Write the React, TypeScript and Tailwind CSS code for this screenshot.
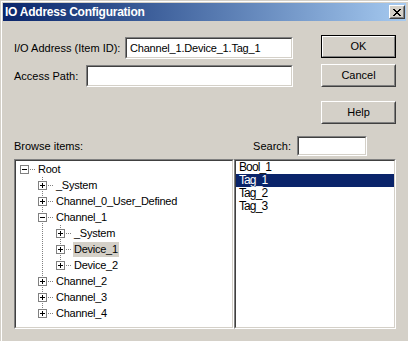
import type { ReactNode } from "react";

type TreeNode = {
  label: string;
  level: number;
  last: boolean;
  expanded?: boolean;
  selected?: boolean;
  through: number[];
};

const treeNodes: TreeNode[] = [
  { label: "Root", level: 0, last: true, expanded: true, through: [] },
  { label: "_System", level: 1, last: false, through: [] },
  { label: "Channel_0_User_Defined", level: 1, last: false, through: [] },
  { label: "Channel_1", level: 1, last: false, expanded: true, through: [] },
  { label: "_System", level: 2, last: false, through: [1] },
  { label: "Device_1", level: 2, last: false, selected: true, through: [1] },
  { label: "Device_2", level: 2, last: true, through: [1] },
  { label: "Channel_2", level: 1, last: false, through: [] },
  { label: "Channel_3", level: 1, last: false, through: [] },
  { label: "Channel_4", level: 1, last: true, through: [] },
];

const tags = ["Bool_1", "Tag_1", "Tag_2", "Tag_3"];

function Sunken({ className, children }: { className: string; children?: ReactNode }) {
  return (
    <div className={`border border-t-[#808080] border-l-[#808080] border-r-white border-b-white ${className}`}>
      <div className="h-full w-full overflow-hidden border border-t-[#404040] border-l-[#404040] border-r-[#d4d0c8] border-b-[#d4d0c8] bg-white">
        {children}
      </div>
    </div>
  );
}

function PushButton({ label, isDefault }: { label: string; isDefault?: boolean }) {
  if (isDefault) {
    return (
      <div className="h-[23px] w-[75px] border border-black">
        <div className="flex h-full items-center justify-center border border-t-white border-l-white border-r-[#808080] border-b-[#808080]">
          {label}
        </div>
      </div>
    );
  }
  return (
    <div className="h-[23px] w-[75px] border border-t-white border-l-white border-r-[#404040] border-b-[#404040]">
      <div className="flex h-full items-center justify-center border border-t-[#d4d0c8] border-l-[#d4d0c8] border-r-[#808080] border-b-[#808080]">
        {label}
      </div>
    </div>
  );
}

function TreeRow({ node }: { node: TreeNode }) {
  const L = node.level * 18;
  const cx = 8.5 + L;
  return (
    <div className="flex h-[16px] items-center">
      <svg width={21 + L} height={16} shapeRendering="crispEdges" className="shrink-0">
        {node.through.map((lv) => (
          <line key={lv} x1={8.5 + lv * 18} x2={8.5 + lv * 18} y1={0} y2={16} stroke="#808080" strokeDasharray="1 1" />
        ))}
        {node.level > 0 ? (
          <line x1={cx} x2={cx} y1={0} y2={node.last ? 8 : 16} stroke="#808080" strokeDasharray="1 1" />
        ) : null}
        <line x1={14 + L} x2={19 + L} y1={8.5} y2={8.5} stroke="#808080" strokeDasharray="1 1" />
        <rect x={4.5 + L} y={4.5} width={8} height={8} fill="white" stroke="#808080" />
        <line x1={6 + L} x2={11 + L} y1={8.5} y2={8.5} stroke="black" />
        {node.expanded ? null : <line x1={cx} x2={cx} y1={6} y2={11} stroke="black" />}
      </svg>
      <span className={`h-[15px] px-[1px] leading-[15px] whitespace-nowrap ${node.selected ? "bg-[#d4d0c8]" : ""}`}>
        {node.label}
      </span>
    </div>
  );
}

export default function App() {
  return (
    <div className="h-[341px] w-[408px] overflow-hidden bg-[#d4d0c8] pl-px pt-px font-['Liberation_Sans',Arial,sans-serif] text-[11px] text-black">
      <div className="h-full border-l border-t border-white pl-px pt-px">
        {/* title bar */}
        <div className="mr-[2px] flex h-[18px] items-center bg-gradient-to-r from-[#0a246a] to-[#a6caf0]">
          <span className="pl-[2px] text-[12px] font-bold leading-none tracking-[-0.25px] text-white">IO Address Configuration</span>
          <div className="ml-auto mr-px h-[14px] w-[16px] border border-t-white border-l-white border-r-[#404040] border-b-[#404040] bg-[#d4d0c8]">
            <div className="flex h-full items-center justify-center border border-t-[#d4d0c8] border-l-[#d4d0c8] border-r-[#808080] border-b-[#808080]">
              <svg width="8" height="7" shapeRendering="crispEdges">
                <rect x="0" y="0" width="2" height="1" />
                <rect x="6" y="0" width="2" height="1" />
                <rect x="1" y="1" width="2" height="1" />
                <rect x="5" y="1" width="2" height="1" />
                <rect x="2" y="2" width="4" height="1" />
                <rect x="3" y="3" width="2" height="1" />
                <rect x="2" y="4" width="4" height="1" />
                <rect x="1" y="5" width="2" height="1" />
                <rect x="5" y="5" width="2" height="1" />
                <rect x="0" y="6" width="2" height="1" />
                <rect x="6" y="6" width="2" height="1" />
              </svg>
            </div>
          </div>
        </div>

        {/* address fields and buttons */}
        <div className="flex">
          <div className="pl-[11px]">
            <div className="mt-[16px] flex h-[22px] items-center">
              <span className="w-[111px] whitespace-nowrap">I/O Address (Item ID):</span>
              <Sunken className="h-[22px] w-[168px]">
                <div className="pl-[3px] leading-[18px] tracking-[-0.2px] whitespace-nowrap">Channel_1.Device_1.Tag_1</div>
              </Sunken>
            </div>
            <div className="mt-[6px] flex h-[22px] items-center">
              <span className="w-[72px] whitespace-nowrap">Access Path:</span>
              <Sunken className="h-[22px] w-[207px]" />
            </div>
          </div>
          <div className="ml-[28px]">
            <div className="mt-[14px]">
              <PushButton label="OK" isDefault />
            </div>
            <div className="mt-[6px]">
              <PushButton label="Cancel" />
            </div>
            <div className="mt-[14px]">
              <PushButton label="Help" />
            </div>
          </div>
        </div>

        {/* browse row */}
        <div className="mt-[12px] flex h-[20px] items-center pl-[11px]">
          <span className="flex-1">Browse items:</span>
          <span>Search:</span>
          <Sunken className="ml-[6px] h-[20px] w-[70px]" />
          <div className="w-[41px]" />
        </div>

        {/* tree and list */}
        <div className="mt-[3px] flex pl-[11px]">
          <Sunken className="h-[170px] w-[220px]">
            <div className="tracking-[-0.25px]">
              {treeNodes.map((node, i) => (
                <TreeRow key={i} node={node} />
              ))}
            </div>
          </Sunken>
          <Sunken className="h-[170px] w-[162px]">
            <div className="text-[12px] tracking-[-0.9px]">
              {tags.map((tag) => (
                <div
                  key={tag}
                  className={`h-[13px] pl-[3px] leading-[13px] ${tag === "Tag_1" ? "bg-[#0a246a] text-white" : ""}`}
                >
                  {tag}
                </div>
              ))}
            </div>
          </Sunken>
        </div>
      </div>
    </div>
  );
}
